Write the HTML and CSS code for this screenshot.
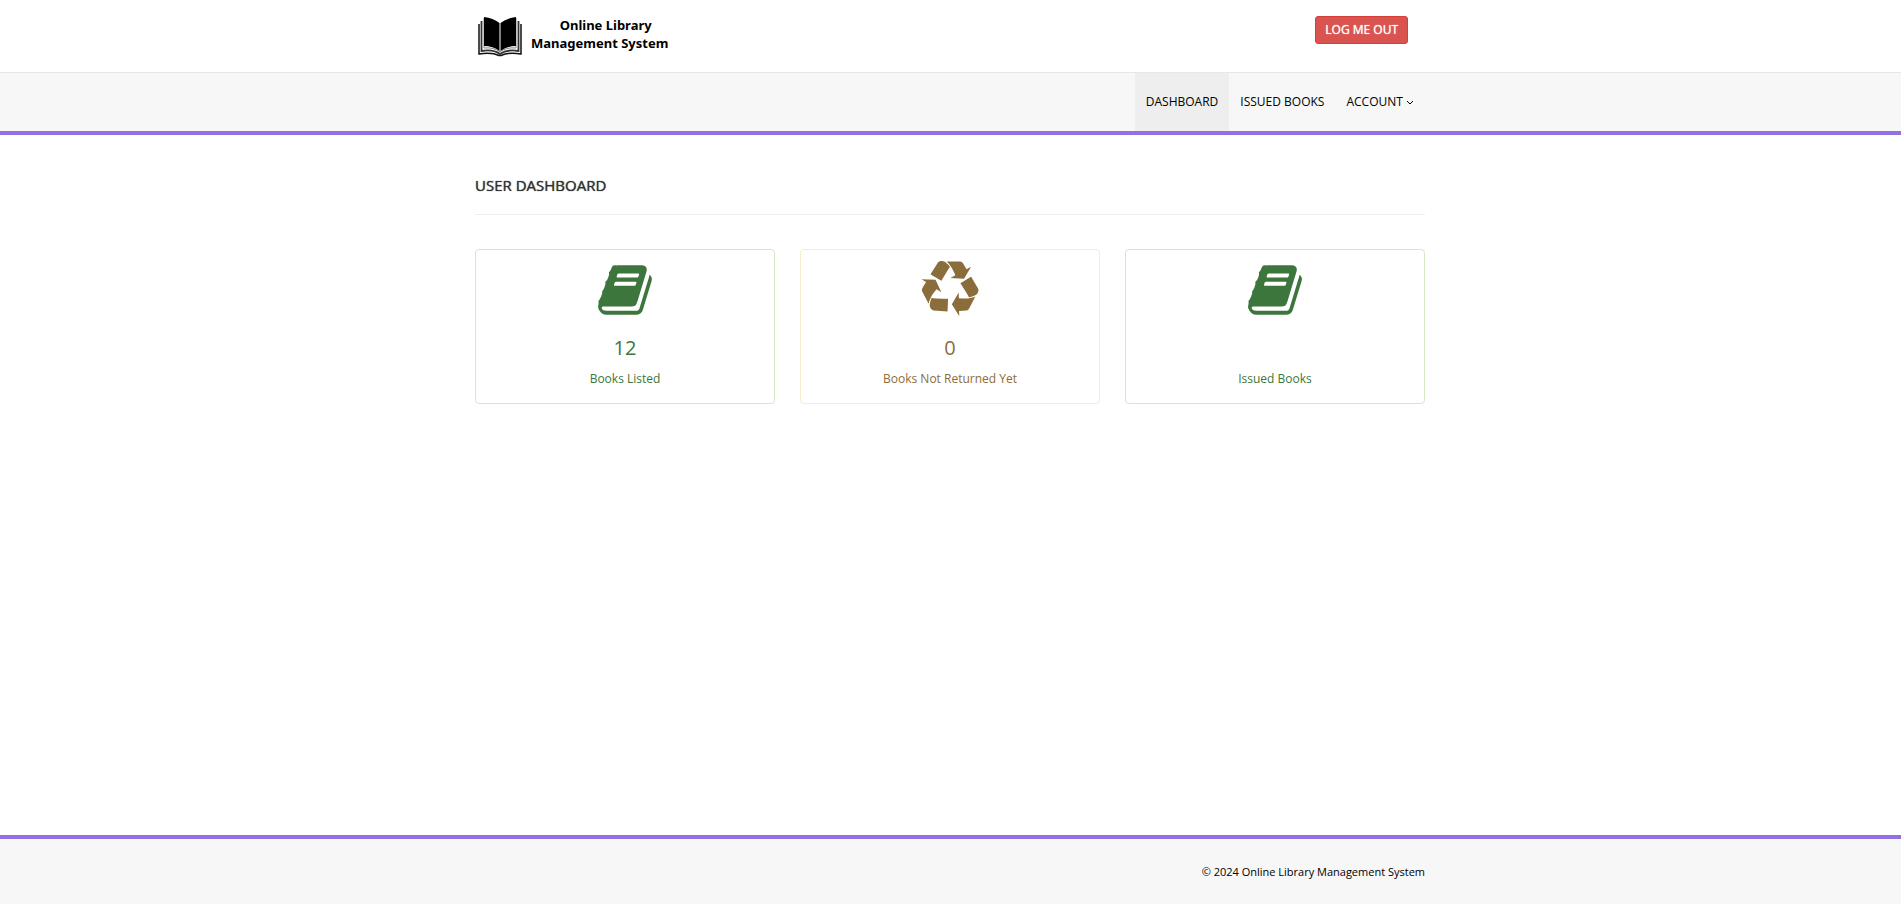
FILE: index.html
```html
<!DOCTYPE html>
<html lang="en">
<head>
<meta charset="utf-8">
<title>Online Library Management System | User Dashboard</title>
<link rel="stylesheet" href="styles.css">
</head>
<body>
<svg class="sprite" aria-hidden="true">
  <symbol id="book" viewBox="0 0 1792 1792"><path d="M1703 478q40 57 18 129l-275 906q-19 64-76.500 107.500t-122.500 43.500h-923q-77 0-148.500-53.500t-99.500-131.500q-24-67-2-127 0-4 3-27t4-37q1-8-3-21.500t-3-19.500q2-11 8-21t16.500-23.500 16.500-23.500q23-38 45-91.500t30-91.500q3-10 .5-30t-.5-28q3-11 17-28t17-23q21-36 42-92t25-90q1-9-2.500-32t.5-28q4-13 22-30.500t22-22.500q19-26 42.500-84.500t27.500-96.500q1-8-3-25.500t-2-26.500q2-8 9-18t18-23 17-21q8-12 16.500-30.500t15-35 16-36 19.500-32 26.500-23.500 36-11.500 47.500 5.500l-1 3q38-9 51-9h761q74 0 114 56t18 130l-274 906q-36 119-71.500 153.500t-128.500 34.500h-869q-27 0-38 15-11 16-1 43 24 70 144 70h923q29 0 56-15.500t35-41.500l300-987q7-22 5-57 38 15 59 43zm-1064 2q-4 13 2 22.500t20 9.500h608q13 0 25.500-9.500t16.500-22.500l21-64q4-13-2-22.500t-20-9.500h-608q-13 0-25.500 9.500t-16.500 22.500zm-83 256q-4 13 2 22.500t20 9.500h608q13 0 25.500-9.500t16.500-22.500l21-64q4-13-2-22.500t-20-9.500h-608q-13 0-25.500 9.500t-16.500 22.500z"/></symbol>
</svg>
<header class="header">
  <div class="container header-row">
    <a class="brand" href="#">
      <svg class="brand-mark" viewBox="0 0 46 42" aria-hidden="true">
        <path d="M2 8V38Q15 36 22 39.500H24Q31 36 44 38V8" fill="none" stroke="#111" stroke-width="1.500"/>
        <path d="M4.500 5V35Q16 33 23 38Q30 33 41.500 35V5" fill="none" stroke="#333" stroke-width="1.800"/>
        <path d="M7 2V32Q17 31 23 36Q29 31 39 32V2" fill="none" stroke="#888" stroke-width="1"/>
        <path d="M7 1Q16 2 22.500 7V35Q16 30 7 30ZM39 1Q30 2 23.500 7V35Q30 30 39 30Z"/>
      </svg>
      <span class="brand-name"><span class="brand-first">Online Library</span>Management System</span>
    </a>
    <button class="logout" type="button">LOG ME OUT</button>
  </div>
</header>
<nav class="menu">
  <div class="container menu-row">
    <a class="menu-link active" href="#">DASHBOARD</a>
    <a class="menu-link" href="#">ISSUED BOOKS</a>
    <a class="menu-link" href="#">ACCOUNT
      <svg class="chevron" viewBox="0 0 8 12" aria-hidden="true"><path d="M1 4L4 7L7 4" fill="none" stroke="currentColor" stroke-width="1"/></svg></a>
  </div>
</nav>
<main class="container content">
  <h1 class="title">USER DASHBOARD</h1>
  <div class="cards">
    <a class="card success" href="#">
      <svg class="icon" aria-hidden="true"><use href="#book"/></svg>
      <span class="count">12</span>
      <span class="label">Books Listed</span>
    </a>
    <a class="card warning" href="#">
      <svg class="icon" viewBox="0 0 1792 1792" aria-hidden="true"><path d="M836 1169l-15 368-2 22-420-29q-36-3-67-31.500t-47-65.500q-11-27-14.500-55t4-65 12-55 21.500-64 19-53q78 12 509 28zm-387-586l180 379-147-92q-63 72-111.500 144.500t-72.500 125-39.500 94.500-18.500 63l-4 21-190-357q-17-26-18-56t6-47l8-18q35-63 114-188l-140-86zm1231 517l-188 359q-12 29-36.500 46.500t-43.500 20.500l-18 4q-71 7-219 12l8 164-230-367 211-362 7 173q170 16 283 5t170-33zm-785-924q-47 63-265 435l-317-187-19-12 225-356q20-31 60-45t80-10q24 2 48.500 12t42 21 41.500 33 36 34.500 36 39.500 32 35zm655 307l212 363q18 37 12.500 76t-27.500 74q-13 20-33 37t-38 28-48.500 22-47 16-51.500 14-46 12q-34-72-265-436l313-195zm-143-226l142-83-220 373-419-20 151-86q-34-89-75-166t-75.500-123.500-64.500-80-47-46.500l-17-13 405 1q31-3 58 10.500t39 28.500l11 15q39 56 112 190z"/></svg>
      <span class="count">0</span>
      <span class="label">Books Not Returned Yet</span>
    </a>
    <a class="card success" href="#">
      <svg class="icon" aria-hidden="true"><use href="#book"/></svg>
      <span class="count"></span>
      <span class="label">Issued Books</span>
    </a>
  </div>
</main>
<footer class="footer">
  <div class="container">© 2024 Online Library Management System</div>
</footer>
</body>
</html>
```
FILE: styles.css
```css
* { box-sizing: border-box; }
body {
  margin: 0;
  padding-bottom: 3px;
  min-height: 100vh;
  display: flex;
  flex-direction: column;
  font-family: "Open Sans", sans-serif;
  font-size: 12px;
  line-height: 30px;
  color: #000;
  background: #fff;
}
a { color: inherit; text-decoration: none; }
.sprite { display: none; }
.container { width: 100%; max-width: 951px; margin: 0 auto; padding-right: 1px; }

.header-row {
  display: flex;
  justify-content: space-between;
  align-items: flex-start;
  padding: 16px 18px 14px 0;
}
.brand { display: flex; gap: 8px; padding-left: 2px; }
.brand-mark { width: 46px; height: 42px; }
.brand-name {
  font-family: "Noto Sans", sans-serif;
  font-size: 13px;
  font-weight: 700;
  line-height: 18px;
  text-align: center;
}
.brand-first { display: block; padding-left: 12px; }
.logout {
  height: 28px;
  padding: 0 9px;
  border: 1px solid #d43f3a;
  border-radius: 3px;
  background: #d9534f;
  color: #fff;
  font: inherit;
  line-height: 18px;
  text-shadow: 0 0 1px #fff;
}

.menu {
  background: #f7f7f7;
  border-top: 1px solid #e7e7e7;
  border-bottom: 4px solid #9170e4;
}
.menu-row { display: flex; justify-content: flex-end; }
.menu-link { padding: 14px 11px; }
.menu-link.active { background: #eee; }
.chevron { width: 8px; height: 12px; vertical-align: middle; }

.content { flex: 1; padding-top: 35px; }
.title {
  margin: 0 0 34px;
  padding-bottom: 14px;
  border-bottom: 1px solid #eee;
  color: #333;
  font-size: 15px;
  font-weight: 400;
  text-shadow: 0 0 1px #333;
}
.cards { display: grid; grid-template-columns: repeat(3, 1fr); gap: 25px; }
.card {
  display: flex;
  flex-direction: column;
  align-items: center;
  padding: 11px 15px 9px;
  border: 1px solid;
  border-radius: 4px;
}
.success { color: #3c763d; border-color: #d6e9c6; }
.warning { color: #8a6d3b; border-color: #faebcc; }
.icon { width: 58px; height: 58px; margin-bottom: 14px; fill: currentColor; }
.count { height: 30px; margin-bottom: 1px; font-size: 20px; }

.footer {
  padding: 18px 0 17px;
  border-top: 4px solid #9170e4;
  background: #f7f7f7;
  font-size: 11px;
  text-align: right;
}
```
